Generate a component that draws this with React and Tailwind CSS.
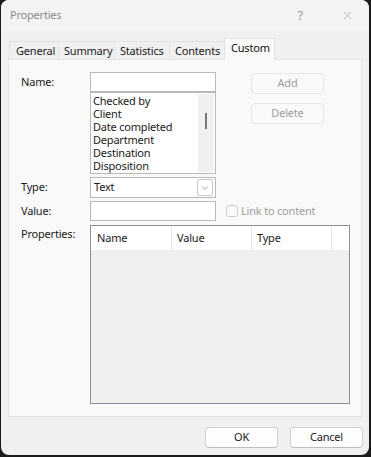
import { X, ChevronDown } from "lucide-react";

const font = { fontFamily: '"Segoe UI", "Noto Sans", Arial, sans-serif' };

const tabs = ["General", "Summary", "Statistics", "Contents"];
const items = ["Checked by", "Client", "Date completed", "Department", "Destination", "Disposition"];

function Btn({ children, disabled, className = "" }) {
  return (
    <div
      className={
        "flex h-[21px] w-[73px] items-center justify-center rounded-[4px] border text-[11px] " +
        (disabled
          ? "border-[#e6e6e6] bg-[#f9f9f9] text-[#9d9d9d] "
          : "border-[#d0d0d0] border-b-[#bdbdbd] bg-[#fdfdfd] text-[#1b1b1b] ") +
        className
      }
    >
      {children}
    </div>
  );
}

export default function App() {
  return (
    <div className="h-[457px] w-[371px] bg-[#1c1c1c] pl-[1px] tracking-[-0.2px]" style={font}>
      <div className="flex h-[455px] w-[368px] flex-col overflow-hidden rounded-[8px] bg-[#f0f0f0] text-[#1b1b1b]">
        {/* title bar */}
        <div className="flex h-[31px] items-center bg-[#f3f3f3] pl-[9px]">
          <span className="text-[11px] text-[#8b8b8b]">Properties</span>
          <span className="ml-auto mr-[38px] text-[13px] text-[#9a9a9a]">?</span>
          <X className="mr-[15px] h-[13px] w-[13px] text-[#9a9a9a]" strokeWidth={1.2} />
        </div>

        {/* tabs */}
        <div className="ml-[8px] mt-[7px] flex h-[21px] items-end">
          {tabs.map((t, i) => (
            <div
              key={t}
              className={
                "flex h-[18px] items-center border-l border-t border-[#e3e3e3] bg-[#f0f0f0] pt-px text-[11px] " +
                ["w-[49px] pl-[6px]", "w-[56px] pl-[5px]", "w-[55px] pl-[5px]", "w-[55px] pl-[5px]"][i]
              }
            >
              {t}
            </div>
          ))}
          <div className="relative z-10 -mb-px flex h-[22px] w-[51px] items-center border-x border-t border-[#e3e3e3] bg-[#f9f9f9] pb-[3px] pl-[6px] text-[11px] text-[#111]">
            Custom
          </div>
        </div>

        {/* panel */}
        <div className="mx-[7px] flex h-[358px] w-[354px] flex-col border border-[#e3e3e3] bg-[#f9f9f9] pl-[12px] pt-[12px] text-[11px]">
          {/* name + list + buttons */}
          <div className="flex items-start">
            <div className="flex h-[20px] w-[69px] items-center">Name:</div>
            <div className="flex w-[126px] flex-col">
              <div className="h-[20px] border border-[#b9b9b9] bg-white" />
              <div className="flex h-[82px] border border-[#b9b9b9] bg-white">
                <div className="flex-1 pl-[2px] pt-[1px] leading-[13px]">
                  {items.map((s) => (
                    <div key={s}>{s}</div>
                  ))}
                </div>
                <div className="my-px mr-px flex w-[16px] justify-center bg-[#f0f0f0] pt-[19px]">
                  <div className="h-[16px] w-[2px] bg-[#7a7a7a]" />
                </div>
              </div>
            </div>
            <div className="ml-[35px] mt-[1px] flex flex-col gap-[9px]">
              <Btn disabled>Add</Btn>
              <Btn disabled>Delete</Btn>
            </div>
          </div>

          {/* type */}
          <div className="mt-[3px] flex items-center">
            <div className="w-[69px]">Type:</div>
            <div className="flex h-[21px] w-[126px] items-center border border-[#b9b9b9] bg-white pl-[3px] pr-[2px]">
              <span>Text</span>
              <div className="ml-auto flex h-[17px] w-[16px] items-center justify-center rounded-[2px] border border-[#c8c8c8]">
                <ChevronDown className="h-[10px] w-[10px] text-[#555]" strokeWidth={1.3} />
              </div>
            </div>
          </div>

          {/* value */}
          <div className="mt-[3px] flex items-center">
            <div className="w-[69px]">Value:</div>
            <div className="h-[20px] w-[126px] border border-[#b9b9b9] bg-white" />
            <div className="ml-[10px] h-[12px] w-[12px] rounded-[3px] border border-[#cfcfcf] bg-[#f9f9f9]" />
            <span className="ml-[3px] text-[#9d9d9d]">Link to content</span>
          </div>

          {/* properties */}
          <div className="mt-[4px] flex items-start">
            <div className="w-[69px] pt-[1px]">Properties:</div>
            <div className="flex h-[179px] w-[260px] flex-col border border-[#8e8e9a] bg-[#efefef]">
              <div className="flex h-[24px] bg-white">
                <div className="flex w-[81px] items-center border-r border-[#e5e5e5] pl-[6px]">Name</div>
                <div className="flex w-[80px] items-center border-r border-[#e5e5e5] pl-[5px]">Value</div>
                <div className="flex w-[80px] items-center border-r border-[#e5e5e5] pl-[5px]">Type</div>
              </div>
            </div>
          </div>
        </div>

        {/* footer buttons */}
        <div className="mt-[10px] flex justify-end gap-[12px] pr-[6px]">
          <Btn>OK</Btn>
          <Btn>Cancel</Btn>
        </div>
      </div>
    </div>
  );
}
